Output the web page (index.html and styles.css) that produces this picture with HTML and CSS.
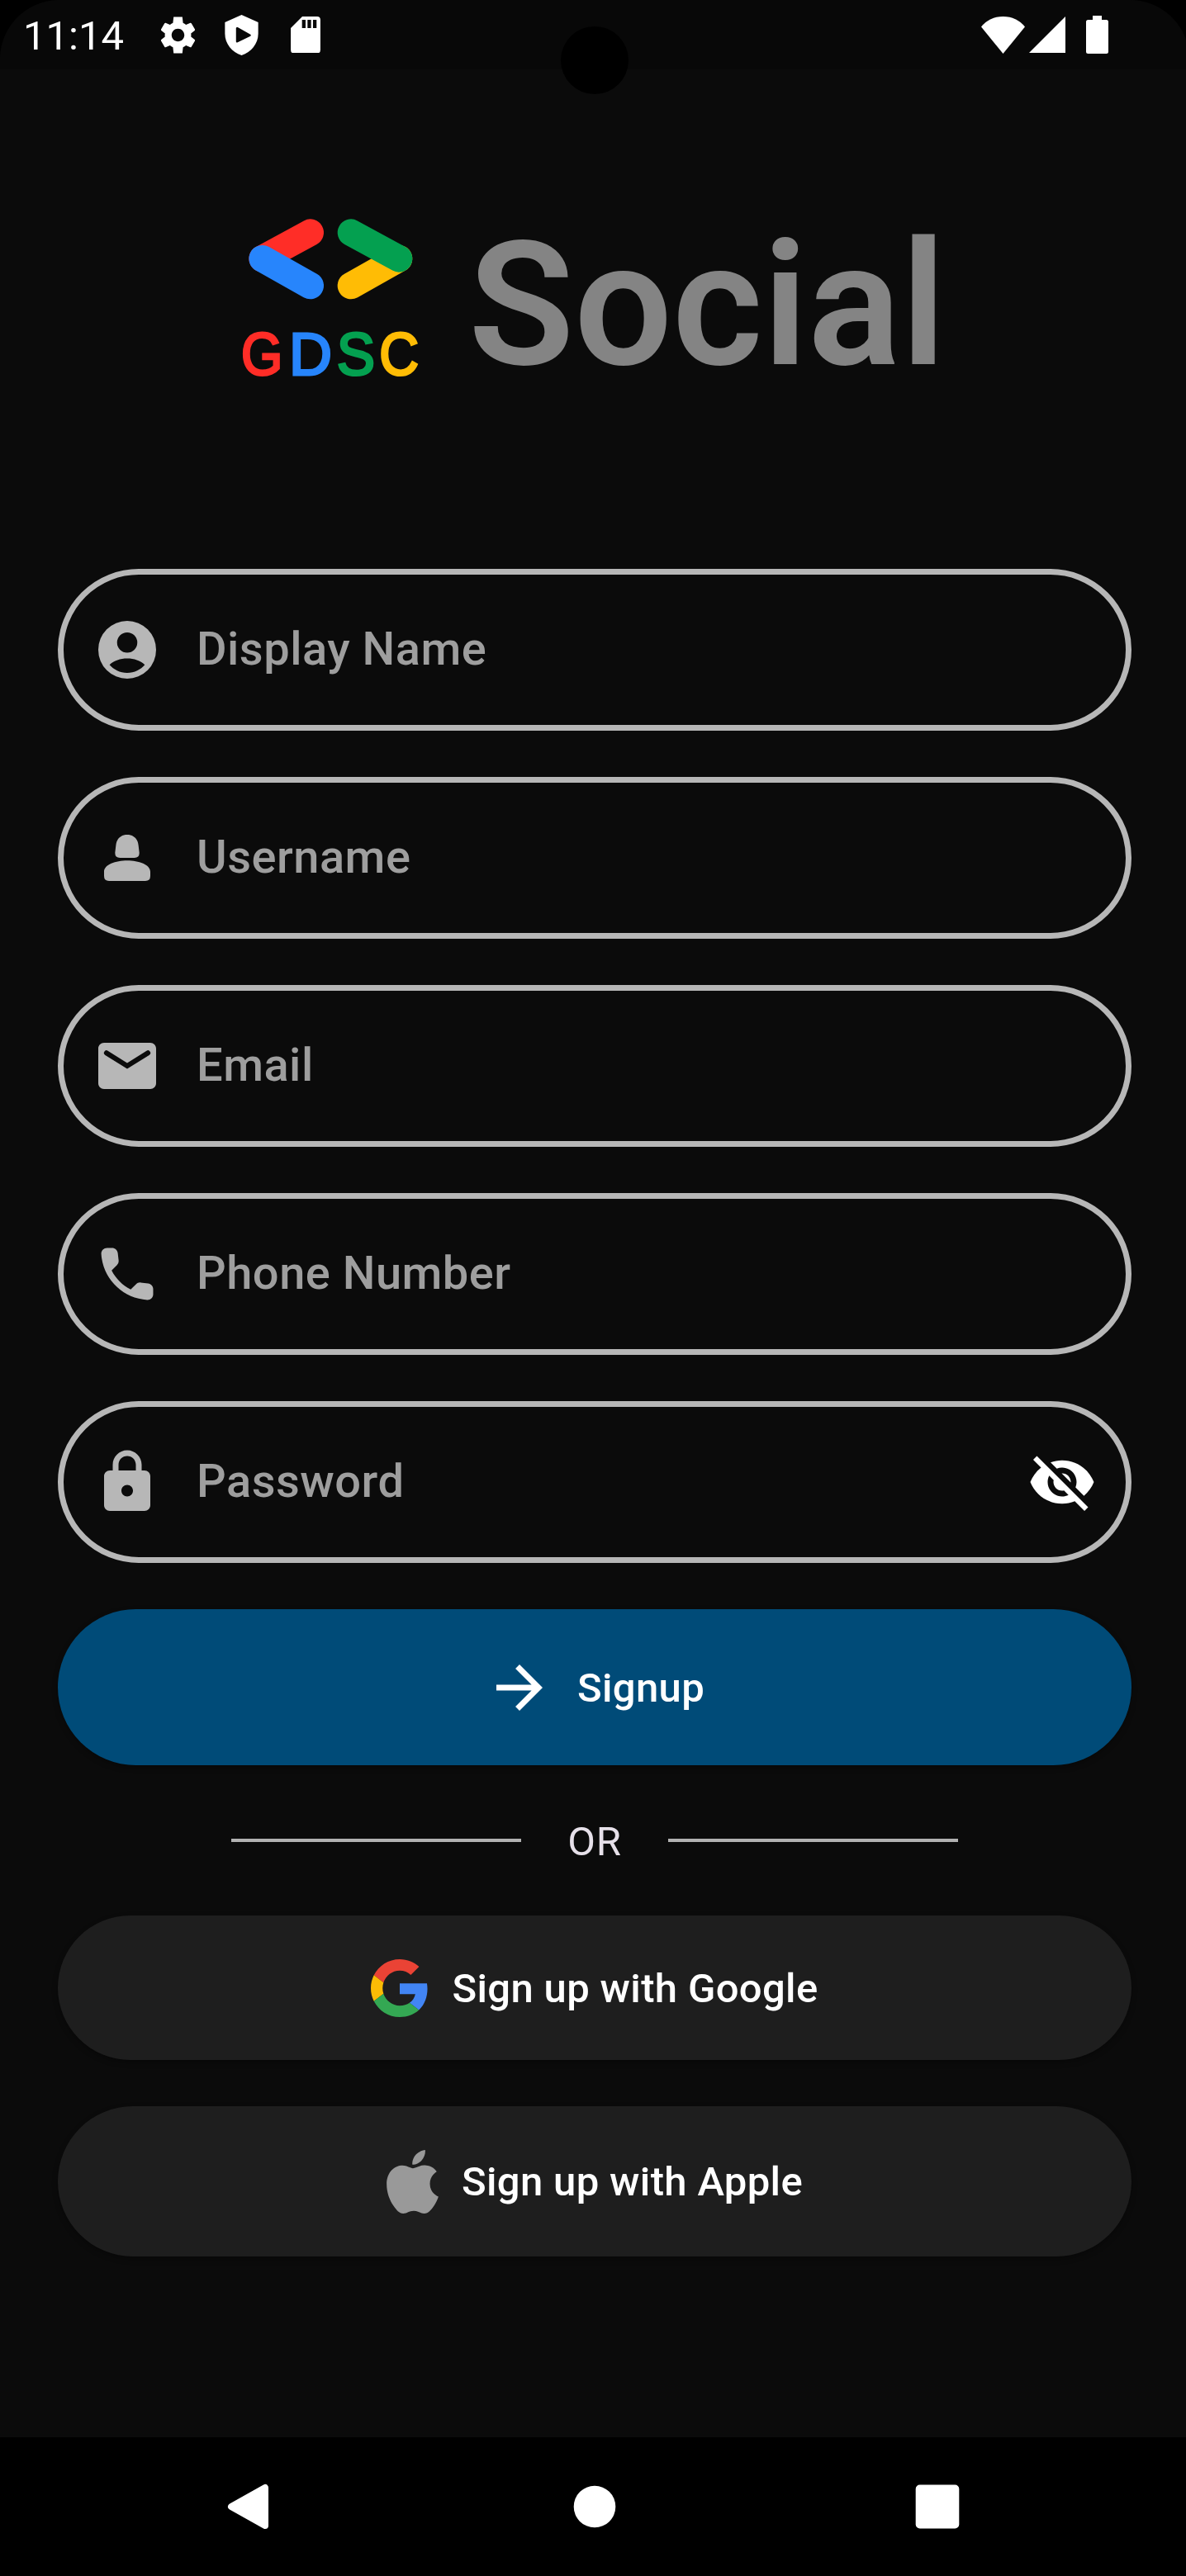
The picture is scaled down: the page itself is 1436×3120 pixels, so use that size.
FILE: index.html
```html
<!DOCTYPE html>
<html lang="en">
<head>
<meta charset="utf-8">
<title>GDSC Social – Sign up</title>
<link rel="stylesheet" href="styles.css">
</head>
<body>
<div class="screen">
  <div class="status-bar">
    <span class="clock">11:14</span>
    <svg class="st-gear" viewBox="0 0 24 24"><path d="M19.14 12.94c.04-.3.06-.61.06-.94 0-.32-.02-.64-.07-.94l2.03-1.58c.18-.14.23-.41.12-.61l-1.92-3.32c-.12-.22-.37-.29-.59-.22l-2.39.96c-.5-.38-1.03-.7-1.62-.94L14.4 2h-4.8l-.36 3.35c-.59.24-1.13.57-1.62.94l-2.39-.96c-.22-.08-.47 0-.59.22L2.74 8.87c-.12.21-.08.47.12.61l2.03 1.58c-.05.3-.09.63-.09.94s.02.64.07.94l-2.03 1.58c-.18.14-.23.41-.12.61l1.92 3.32c.12.22.37.29.59.22l2.39-.96c.5.38 1.03.7 1.62.94L9.6 22h4.8l.36-3.35c.59-.24 1.13-.56 1.62-.94l2.39.96c.22.08.47 0 .59-.22l1.92-3.32c.12-.22.07-.47-.12-.61l-2.01-1.58zM12 15.5c-1.93 0-3.5-1.57-3.5-3.5s1.57-3.5 3.5-3.5 3.5 1.57 3.5 3.5-1.57 3.5-3.5 3.5z"/></svg>
    <svg class="st-shield" viewBox="0 0 122 146"><path fill-rule="evenodd" d="M61 0L121 27V68C121 104 96 135 61 146C26 135 1 104 1 68V27ZM41 48V97Q42 102 47 99L93 77Q97 74 93 71L47 45Q42 43 41 48Z"/></svg>
    <svg class="st-sd" viewBox="0 0 108 134"><path fill-rule="evenodd" d="M42 0H96Q108 0 108 12V122Q108 134 96 134H12Q0 134 0 122V42ZM41 12V42H54V12ZM61 12V42H74V12ZM81 12V42H94V12Z"/></svg>
    <svg class="st-wifi" viewBox="0 0 53 45"><path d="M0 12.500Q10 0 26.500 0T53 12.500L26.500 45Z"/></svg>
    <svg class="st-signal" viewBox="0 0 44 44"><path d="M44 0V44H0Z"/></svg>
    <svg class="st-battery" viewBox="0 0 27 46"><path d="M8 0H19V5H24.500Q27 5 27 7.500V43.500Q27 46 24.500 46H2.500Q0 46 0 43.500V7.500Q0 5 2.500 5H8Z"/></svg>
  </div>
  <div class="camera"></div>

  <main class="content">
    <header class="brand">
      <svg class="logo" viewBox="0 0 220 215">
        <g stroke-width="32.600" stroke-linecap="round">
          <path d="M85.700 19.700L27.700 51.300" stroke="#ff2d27"/>
          <path d="M27.700 51.300L85.700 84" stroke="#2785fc"/>
          <path d="M135 84L193 51.300" stroke="#ffbc05"/>
          <path d="M135 19.700L193 51.300" stroke="#04a050"/>
        </g>
        <g class="logo-text">
          <text x="2.100" y="192.200" textLength="50.300" lengthAdjust="spacingAndGlyphs" fill="#ff2d27" stroke="#ff2d27">G</text>
          <text x="59.900" y="192.200" textLength="52" lengthAdjust="spacingAndGlyphs" fill="#2785fc" stroke="#2785fc">D</text>
          <text x="117.700" y="192.200" textLength="46.300" lengthAdjust="spacingAndGlyphs" fill="#04a050" stroke="#04a050">S</text>
          <text x="169.200" y="192.200" textLength="47.800" lengthAdjust="spacingAndGlyphs" fill="#ffbc05" stroke="#ffbc05">C</text>
        </g>
      </svg>
      <h1 class="title">Social</h1>
    </header>

    <form class="form">
      <label class="field">
        <svg class="icon" viewBox="0 0 24 24"><path fill-rule="evenodd" d="M12 2a10 10 0 1 0 0 20a10 10 0 1 0 0-20zM12 6a3.500 3.500 0 1 1 0 7a3.500 3.500 0 1 1 0-7zM12 20c-2.500 0-4.650-1.200-6.100-2.800C7.500 15.700 9.600 15 12 15s4.500.7 6.100 2.200C16.650 18.800 14.500 20 12 20z"/></svg>
        <span>Display Name</span>
      </label>
      <label class="field">
        <svg class="icon" viewBox="0 0 24 24"><path d="M12 4C14.300 4 15.700 5.500 15.900 7.700L16.200 10.300Q16.200 12 14.500 12H9.500Q7.800 12 7.800 10.300L8.100 7.700C8.300 5.500 9.700 4 12 4ZM12 12.900C16 12.900 20 14.300 20 16.800V18.300Q20 20 18.300 20H5.700Q4 20 4 18.300V16.800C4 14.300 8 12.900 12 12.900Z"/></svg>
        <span>Username</span>
      </label>
      <label class="field">
        <svg class="icon" viewBox="0 0 24 24"><path d="M20 4H4c-1.100 0-2 .9-2 2v12c0 1.100.9 2 2 2h16c1.100 0 2-.9 2-2V6c0-1.100-.9-2-2-2zm-.4 4.250L12 13 4.400 8.250a.85.85 0 1 1 .9-1.440L12 11l6.700-4.190a.85.85 0 1 1 .9 1.440z"/></svg>
        <span>Email</span>
      </label>
      <label class="field">
        <svg class="icon" viewBox="0 0 24 24"><path d="M19.230 15.260l-2.540-.29c-.61-.07-1.210.14-1.640.57l-1.840 1.840c-2.830-1.440-5.150-3.750-6.590-6.590l1.850-1.850c.43-.43.64-1.030.57-1.640l-.29-2.520c-.12-1.010-.97-1.770-1.990-1.770H5.030c-1.130 0-2.070.94-2 2.070.53 8.540 7.360 15.360 15.890 15.890 1.130.07 2.070-.87 2.070-2v-1.730c.01-1.010-.75-1.860-1.760-1.980z"/></svg>
        <span>Phone Number</span>
      </label>
      <label class="field">
        <svg class="icon" viewBox="0 0 24 24"><path d="M18 8h-1V6c0-2.760-2.240-5-5-5S7 3.240 7 6v2H6c-1.100 0-2 .9-2 2v10c0 1.100.9 2 2 2h12c1.100 0 2-.9 2-2V10c0-1.100-.9-2-2-2zm-6 9c-1.100 0-2-.9-2-2s.9-2 2-2 2 .9 2 2-.9 2-2 2zM9 8V6c0-1.660 1.340-3 3-3s3 1.340 3 3v2H9z"/></svg>
        <span>Password</span>
        <svg class="icon toggle" viewBox="0 0 24 24"><path d="M12 7c2.760 0 5 2.240 5 5 0 .65-.13 1.260-.36 1.830l2.920 2.920c1.510-1.260 2.700-2.890 3.430-4.750-1.730-4.390-6-7.500-11-7.500-1.400 0-2.740.25-3.980.7l2.160 2.160C10.740 7.130 11.350 7 12 7zM2 4.270l2.280 2.280.46.46C3.080 8.300 1.780 10.020 1 12c1.730 4.390 6 7.500 11 7.500 1.550 0 3.030-.3 4.380-.84l.42.42L19.730 22 21 20.730 3.270 3 2 4.270zM7.530 9.800l1.550 1.550c-.05.21-.08.43-.08.65 0 1.660 1.340 3 3 3 .22 0 .44-.03.65-.08l1.550 1.550c-.67.33-1.410.53-2.200.53-2.760 0-5-2.240-5-5 0-.79.2-1.530.53-2.200zm4.310-.78l3.150 3.150.02-.16c0-1.660-1.340-3-3-3l-.17.01z"/></svg>
      </label>
      <button type="button" class="btn primary">
        <svg class="arrow" viewBox="0 0 24 24"><path d="M12 4l-1.410 1.410L16.170 11H4v2h12.170l-5.580 5.590L12 20l8-8-8-8z"/></svg>
        <span>Signup</span>
      </button>
    </form>

    <div class="divider"><span class="rule"></span><span class="or">OR</span><span class="rule"></span></div>

    <div class="social">
      <button type="button" class="btn google">
        <svg class="g-icon" viewBox="0 0 48 48"><path fill="#ea4335" d="M24 9.500c3.540 0 6.710 1.220 9.210 3.600l6.850-6.850C35.900 2.380 30.470 0 24 0 14.620 0 6.510 5.380 2.560 13.220l7.980 6.190C12.430 13.720 17.740 9.500 24 9.500z"/><path fill="#4285f4" d="M46.980 24.550c0-1.570-.15-3.090-.38-4.550H24v9.020h12.940c-.58 2.960-2.260 5.480-4.780 7.180l7.730 6c4.510-4.180 7.090-10.360 7.090-17.650z"/><path fill="#fbbc05" d="M10.530 28.590c-.48-1.450-.76-2.990-.76-4.590s.27-3.140.76-4.590l-7.980-6.190C.92 16.460 0 20.120 0 24c0 3.880.92 7.540 2.560 10.780l7.970-6.190z"/><path fill="#34a853" d="M24 48c6.480 0 11.930-2.130 15.890-5.810l-7.730-6c-2.150 1.450-4.920 2.300-8.160 2.300-6.260 0-11.570-4.220-13.470-9.910l-7.980 6.190C6.510 42.620 14.620 48 24 48z"/></svg>
        <span>Sign up with Google</span>
      </button>
      <button type="button" class="btn apple">
        <svg class="a-icon" viewBox="0 0 814 1000"><path d="M788.100 340.900c-5.800 4.500-108.200 62.200-108.200 190.500 0 148.400 130.300 200.900 134.200 202.200-.6 3.200-20.700 71.900-68.700 141.900-42.800 61.600-87.500 123.100-155.500 123.100s-85.500-39.500-164-39.500c-76.500 0-103.700 40.800-165.900 40.800s-105.600-57-155.500-127C46.700 790.700 0 663 0 541.800c0-194.400 126.400-297.500 250.800-297.500 66.100 0 121.200 43.400 162.700 43.400 39.500 0 101.100-46 176.300-46 28.500 0 130.900 2.600 198.300 99.200zm-234-181.500c31.100-36.900 53.100-88.100 53.100-139.300 0-7.100-.6-14.300-1.900-20.100-50.600 1.900-110.800 33.700-147.100 75.800-28.500 32.400-55.100 83.600-55.100 135.500 0 7.800 1.300 15.600 1.900 18.100 3.200.6 8.400 1.300 13.600 1.300 45.400 0 102.500-30.400 135.500-71.300z"/></svg>
        <span>Sign up with Apple</span>
      </button>
    </div>
  </main>

  <nav class="nav-bar">
    <svg class="nav-icon" viewBox="0 0 60 60"><path d="M46 7V53L5 30Z" stroke-width="8" stroke-linejoin="round"/></svg>
    <svg class="nav-icon" viewBox="0 0 60 60"><circle cx="30" cy="30" r="25.300"/></svg>
    <svg class="nav-icon" viewBox="0 0 60 60"><rect x="3.700" y="3.500" width="52.600" height="53" rx="5"/></svg>
  </nav>
</div>
</body>
</html>
```
FILE: styles.css
```css
* { box-sizing: border-box; }

html { background: #000; }

body {
  margin: 0;
  overflow: hidden;
  font-family: Roboto, "Liberation Sans", sans-serif;
}

svg { display: block; flex: none; fill: currentColor; }

.screen {
  position: relative;
  display: flex;
  flex-direction: column;
  width: 1440px;
  height: 3120px;
  overflow: hidden;
  background: #0b0b0b;
}

/* system status bar */
.status-bar {
  display: flex;
  align-items: center;
  height: 84px;
  padding: 0 98px 0 28px;
  color: #fff;
  background:
    radial-gradient(circle at 72px 72px, #080808 71.500px, #000 72.500px) 0 0 / 72px 72px no-repeat,
    radial-gradient(circle at 0 72px, #080808 71.500px, #000 72.500px) 100% 0 / 72px 72px no-repeat,
    #080808;
}

.clock { width: 161px; font-size: 49px; line-height: 60px; padding-top: 3px; }
.st-gear { width: 53px; height: 53px; }
.st-shield { width: 41px; height: 49px; margin-left: 30px; }
.st-sd { width: 36px; height: 44.500px; margin-left: 38.500px; }
.st-wifi { width: 53px; height: 45px; margin-left: auto; }
.st-signal { width: 44px; height: 44px; margin-left: 4.500px; }
.st-battery { width: 27px; height: 46px; margin-left: 25.500px; }

/* punch-hole camera over the screen */
.camera {
  position: absolute;
  left: 679px;
  top: 32px;
  width: 82px;
  height: 82px;
  border-radius: 50%;
  background: #000;
}

.content { flex: 1; padding: 0 70px; }

.brand {
  display: flex;
  align-items: flex-start;
  gap: 57px;
  height: 605px;
  padding: 178px 0 0 220px;
}

.logo { width: 220px; height: 215px; overflow: visible; }
.logo-text { font: 72px "Liberation Sans", Arial, sans-serif; stroke-width: 3px; }

.title {
  margin: -16px 0 0;
  font-size: 210px;
  line-height: 246px;
  font-weight: 600;
  color: #848484;
}

.form { display: flex; flex-direction: column; gap: 56px; }

.field {
  display: flex;
  align-items: center;
  gap: 42px;
  height: 196px;
  padding: 0 35px;
  border: 7px solid #b7b7b7;
  border-radius: 98px;
  font-size: 56px;
  line-height: 66px;
  font-weight: 500;
  letter-spacing: 0.500px;
  color: #9e9e9e;
}

.field span { padding-bottom: 2px; }
.icon { width: 84px; height: 84px; color: #b7b7b7; }
.toggle { margin-left: auto; color: #fff; }

.btn {
  display: flex;
  align-items: center;
  justify-content: center;
  gap: 28px;
  width: 100%;
  border: 0;
  padding: 0;
  border-radius: 100px;
  font: 500 49px/58px Roboto, "Liberation Sans", sans-serif;
  letter-spacing: 0.350px;
  color: #fff;
  background: #1e1e1e;
  box-shadow: 0 3px 7px rgba(0, 0, 0, 0.3);
}

.btn span { padding-top: 2px; }

.primary { height: 189px; background: #004b78; }
.arrow { width: 84px; height: 84px; }

.divider {
  display: flex;
  align-items: center;
  height: 182px;
  padding: 0 210px;
}

.rule { flex: 1; height: 4px; background: #b2b2b2; }
.or {
  width: 178px;
  padding-top: 3px;
  text-align: center;
  font-size: 49px;
  line-height: 58px;
  letter-spacing: 0.875px;
  color: #e6e0e9;
}

.social { display: flex; flex-direction: column; gap: 56px; }
.google { height: 175px; }
.apple { height: 182px; }
.g-icon { width: 70px; height: 70px; }
.a-icon { width: 63px; height: 77px; color: #999; }

/* system navigation bar */
.nav-bar {
  display: flex;
  align-items: center;
  justify-content: space-between;
  height: 168px;
  padding: 0 275px;
  background: #000;
  color: #fff;
}

.nav-icon { width: 60px; height: 60px; stroke: currentColor; stroke-width: 0; }
```
